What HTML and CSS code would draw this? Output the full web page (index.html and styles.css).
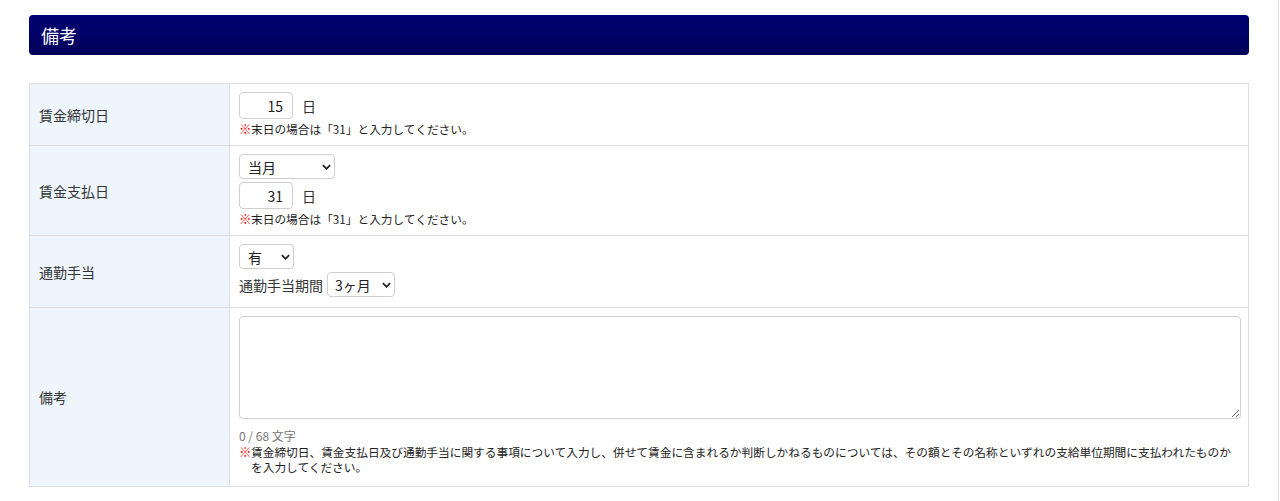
FILE: index.html
```html
<!DOCTYPE html>
<html lang="ja">
<head>
<meta charset="utf-8">
<title>備考</title>
<link rel="stylesheet" href="styles.css">
</head>
<body>
<div class="page">
  <h2 class="section-title">備考</h2>
  <table class="form-table">
    <tr class="row-1">
      <th>賃金締切日</th>
      <td>
        <div class="line">
          <input class="day" type="text" value="15"><span class="unit">日</span>
        </div>
        <p class="note"><span class="mark">※</span><span>末日の場合は「31」と入力してください。</span></p>
      </td>
    </tr>
    <tr class="row-2">
      <th>賃金支払日</th>
      <td>
        <div class="line">
          <span class="sel sel-month"><select><option>当月</option></select><svg class="chev" viewBox="0 0 10 6" width="9" height="6"><path d="M1 1l4 4 4-4" fill="none" stroke="#222" stroke-width="2"/></svg></span>
        </div>
        <div class="line gap">
          <input class="day" type="text" value="31"><span class="unit">日</span>
        </div>
        <p class="note"><span class="mark">※</span><span>末日の場合は「31」と入力してください。</span></p>
      </td>
    </tr>
    <tr class="row-3">
      <th>通勤手当</th>
      <td>
        <div class="line">
          <span class="sel sel-yes"><select><option>有</option></select><svg class="chev" viewBox="0 0 10 6" width="9" height="6"><path d="M1 1l4 4 4-4" fill="none" stroke="#222" stroke-width="2"/></svg></span>
        </div>
        <div class="line gap last">
          <span class="label">通勤手当期間</span>
          <span class="sel sel-period"><select><option>3ヶ月</option></select><svg class="chev" viewBox="0 0 10 6" width="9" height="6"><path d="M1 1l4 4 4-4" fill="none" stroke="#222" stroke-width="2"/></svg></span>
        </div>
      </td>
    </tr>
    <tr class="row-4">
      <th>備考</th>
      <td>
        <textarea class="memo"></textarea>
        <p class="count">0 / 68 文字</p>
        <p class="note long"><span class="mark">※</span><span>賃金締切日、賃金支払日及び通勤手当に関する事項について入力し、併せて賃金に含まれるか判断しかねるものについては、その額とその名称といずれの支給単位期間に支払われたものかを入力してください。</span></p>
      </td>
    </tr>
  </table>
</div>
</body>
</html>
```

FILE: styles.css
```css
html, body {
  margin: 0;
  padding: 0;
  background: #fff;
}
body {
  font-family: "Noto Sans CJK JP", "Noto Sans", sans-serif;
  color: #333;
  font-size: 14px;
}
.page {
  width: 1279px;
  min-height: 501px;
  box-sizing: border-box;
  border-right: 1px solid #dcdcdc;
  padding: 15px 29px 0 29px;
}
.section-title {
  margin: 0;
  height: 40px;
  line-height: 40px;
  padding-left: 12px;
  font-size: 18px;
  font-weight: normal;
  color: #fff;
  border-radius: 4px;
  background: linear-gradient(#000072, #00005a);
}
.form-table {
  margin-top: 28px;
  width: 100%;
  border-collapse: collapse;
}
.form-table th,
.form-table td {
  border: 1px solid #dddddd;
}
.form-table th {
  width: 190px;
  background: #eef5fd;
  text-align: left;
  font-weight: normal;
  vertical-align: middle;
  padding: 0 0 0 9px;
  color: #333;
}
.form-table td {
  padding: 8px 7px 9px 9px;
  vertical-align: top;
}
.line {
  display: flex;
  align-items: center;
}
.line.gap {
  margin-top: 3px;
}
.line.last {
  margin-bottom: 1px;
}
.day {
  box-sizing: border-box;
  width: 54px;
  height: 27px;
  border: 1px solid #cfcfcf;
  border-radius: 4px;
  padding: 0 9px;
  text-align: right;
  font-family: inherit;
  font-size: 14px;
  color: #222;
  margin: 0;
}
.unit {
  margin-left: 9px;
  color: #333;
}
.sel {
  position: relative;
  display: inline-block;
}
.sel select {
  appearance: none;
  -webkit-appearance: none;
  box-sizing: border-box;
  height: 25px;
  border: 1px solid #cfcfcf;
  border-radius: 4px;
  background: #fff;
  padding: 0 0 0 8px;
  font-family: inherit;
  font-size: 14px;
  color: #222;
  margin: 0;
  display: block;
}
.sel-month select { width: 96px; }
.sel-yes select { width: 55px; }
.sel-period select { width: 68px; padding-left: 7px; }
.chev {
  position: absolute;
  right: 4px;
  top: 10px;
  pointer-events: none;
}
.label {
  margin-right: 4px;
  color: #333;
}
.note {
  margin: 2px 0 0 0;
  font-size: 11.7px;
  line-height: 15px;
  color: #222;
  display: flex;
}
.mark {
  color: #ee1111;
  flex: none;
  width: 12px;
  font-weight: bold;
  font-size: 12.5px;
}
.memo {
  display: block;
  box-sizing: border-box;
  width: 100%;
  height: 103px;
  border: 1px solid #cfcfcf;
  border-radius: 4px;
  margin: 0;
  padding: 6px 8px;
  font-family: inherit;
  font-size: 14px;
  resize: vertical;
}
.count {
  margin: 9px 0 0 0;
  font-size: 12px;
  line-height: 16px;
  color: #777;
}
.note.long {
  margin-top: 0;
}
.row-4 td {
  padding-bottom: 12px;
}
```
